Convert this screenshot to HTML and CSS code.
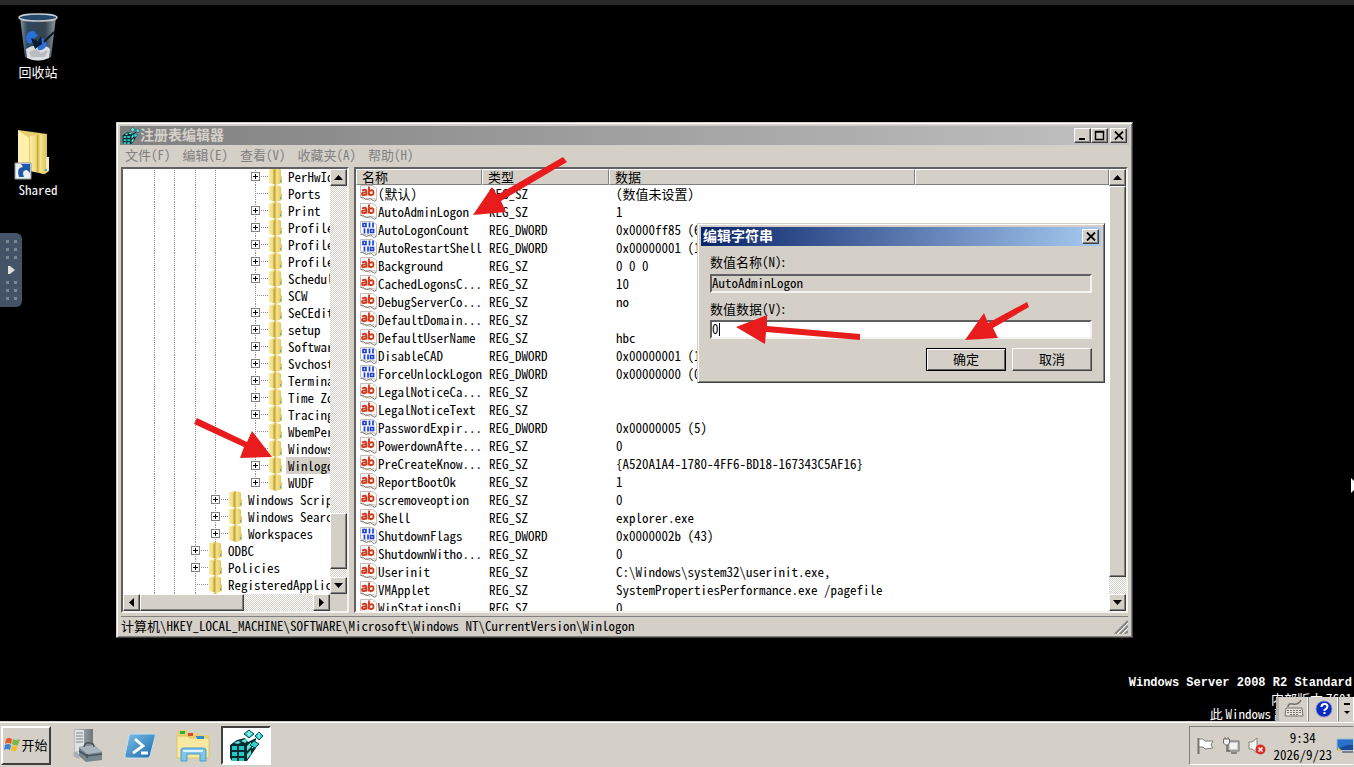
FILE: index.html
```
<!DOCTYPE html>
<html lang="zh-CN">
<head>
<meta charset="utf-8">
<title>注册表编辑器</title>
<link rel="stylesheet" href="styles.css">
</head>
<body>
<svg class="defs" aria-hidden="true">
  <defs>
    <linearGradient id="gold" x1="0" x2="1" y1="0" y2="0"><stop offset="0" stop-color="#f8eda4"/><stop offset=".36" stop-color="#efda7a"/><stop offset=".44" stop-color="#c9aa3c"/><stop offset=".6" stop-color="#f5e590"/><stop offset="1" stop-color="#dcc055"/></linearGradient>
    <linearGradient id="glass" x1="0" x2="1" y1="0" y2="0"><stop offset="0" stop-color="#9aa5ae"/><stop offset=".2" stop-color="#34506a"/><stop offset=".7" stop-color="#3b4a58"/><stop offset="1" stop-color="#a4adb5"/></linearGradient>
    <linearGradient id="blue" x1="0" x2="1" y1="0" y2="1"><stop offset="0" stop-color="#7ec0ea"/><stop offset="1" stop-color="#1768a8"/></linearGradient>
    <linearGradient id="steel" x1="0" x2="1" y1="0" y2="0"><stop offset="0" stop-color="#b8bec2"/><stop offset="1" stop-color="#6e777d"/></linearGradient>
    <symbol id="folder" viewBox="0 0 15 17"><path d="M1 2Q1 1 3 1L7 0L12 1L13 2V8L14 9V15L8 17L1 15Z" fill="url(#gold)"/><path d="M6 2V16" stroke="#b99a32" stroke-width="1"/><path d="M12.500 12v2" stroke="#57a8c6"/></symbol>
    <symbol id="ab" viewBox="0 0 17 17"><path d="M.5.5h12l4 3v11l-4-1-3 2-3-2-3 .5-3-2z" fill="#fcfbfa" stroke="#c4c1bd"/><path d="M.5 12.500q2-1 4 1t4 .5 4 1 4 0" fill="none" stroke="#77736f"/><path d="M2 5.500q4-2 4.500 1v4M6 7.500Q2 7 2 9t4 .5M9 1.500v9M9.500 6q4-2 4 1.500t-4 2" fill="none" stroke="#d43a1e" stroke-width="1.900"/></symbol>
    <symbol id="bin" viewBox="0 0 17 17"><path d="M.5.5h12l4 3v11l-4-1-3 2-3-2-3 .5-3-2z" fill="#f8fafc" stroke="#c4c1bd"/><path d="M.5 13.500q2-1 4 1t4 0 4 1 4-1" fill="none" stroke="#77736f"/><path d="M3 2.500h3v3H3zM9.500 1.500v5M13 1.500v5M4.500 7.500v5M8 7.500v5M10.500 8.500h3v3h-3z" fill="none" stroke="#1c3fd8" stroke-width="1.700"/></symbol>
    <symbol id="reg" viewBox="0 0 34 34"><path d="M1 16L8 11l8-2 3 4 8-4v10l-9 13H3L1 29z" fill="#062d30"/><path d="M3 17h5v4H3zM10 17h5v4h-5zM3 23h5v4H3zM10 23h5v4h-5zM3 29h5v3H3zM10 29h5v3h-5z" fill="#22c9c4"/><path d="M5 14l4-2 3 1-3 2zM12 12l4-2 3 1-3 3zM18 17l4-4v5l-4 4zM18 25l4-4v4l-4 5zM23 14l4-3v5l-4 4z" fill="#55e9e2"/><path d="M20 1l5 4-5 4-5-4zM30 3l4 4-4 4-4-4zM25 12l5 3-4 4-5-3z" fill="#35cfcb" stroke="#064c50"/><path d="M20 2v5M30 4v5M18 4l2 2 3-2" stroke="#b9fffa" fill="none"/></symbol>
    <symbol id="up" viewBox="0 0 9 5"><path d="M0 5L4.500 0L9 5z"/></symbol>
    <symbol id="down" viewBox="0 0 9 5"><path d="M0 0h9L4.500 5z"/></symbol>
    <symbol id="left" viewBox="0 0 5 9"><path d="M5 0v9L0 4.500z"/></symbol>
    <symbol id="right" viewBox="0 0 5 9"><path d="M0 0v9l5-4.500z"/></symbol>
    <symbol id="cross" viewBox="0 0 10 9"><path d="M1 .5l8 8M9 .5l-8 8" stroke="#000" stroke-width="1.800"/></symbol>
  </defs>
</svg>

<div class="screen">
  <main class="desktop">
    <div class="shortcuts">
      <a class="shortcut" href="#recycle">
        <svg width="42" height="50" viewBox="0 0 42 50"><path d="M3 4L8 44q13 7 26 0l5-40z" fill="url(#glass)" opacity=".9"/><path d="M9 36q6-4 12-3 8-2 12 3l-1 9q-11 5-22 0z" fill="#dcdedf"/><path d="M12 39l7-3 5 4 7-3-3 7H14z" fill="#b9bdc0"/><path d="M9 25q1-8 8-7l4 5-5 3-2 5q-5-1-5-6zM19 28l7-3 4 6q-2 7-9 6z" fill="#2d6fd8"/><path d="M14 25l7 3 3-5 1 8-7 5z" fill="#0a1c33"/><path d="M37 19L27 29" stroke="#101a24" stroke-width="2"/><ellipse cx="21" cy="4.500" rx="19" ry="3.500" fill="#25496b" stroke="#c8cdd2" stroke-width="1.500"/></svg>
        <span>回收站</span>
      </a>
      <a class="shortcut" href="#shared">
        <svg width="50" height="52" viewBox="0 0 50 52"><path d="M9 1l29 4v23l2 1v13l-4 3-27-6z" fill="#e7cd70"/><path d="M9 1l11 8v36L9 39z" fill="#fff0ac"/><path d="M21 7l17-2v35l-3 5-14-3z" fill="url(#gold)"/><path d="M37 28h3v13l-3 2z" fill="#f5edc0"/><path d="M37 40v2" stroke="#3fa2d0" stroke-width="2"/><path d="M6 34h16v16H6z" fill="#eef1f4" stroke="#8d969e"/><path d="M10 48q-3-10 4-10l-2-3h9v9l-3-3q-6 0-3 7z" fill="#1e58a6"/></svg>
        <span class="latin">Shared</span>
      </a>
    </div>

    <button class="side-handle" aria-label="展开工具栏"><i></i><svg width="8" height="10" viewBox="0 0 8 10"><path d="M1 1h2l5 4-5 4H1z" fill="#ddd"/></svg><i></i></button>

    <section class="window registry" aria-label="注册表编辑器">
      <header class="titlebar inactive">
        <svg width="18" height="18"><use href="#reg"/></svg>
        <h1>注册表编辑器</h1>
        <button aria-label="最小化"><svg width="12" height="11"><path d="M2 9h6" stroke="#000" stroke-width="2"/></svg></button>
        <button aria-label="最大化"><svg width="12" height="11"><path d="M1.500 1.500h8v8h-8zM1 2h9" fill="none" stroke="#000" stroke-width="1.500"/></svg></button>
        <button class="close" aria-label="关闭"><svg width="10" height="9"><use href="#cross"/></svg></button>
      </header>
      <nav class="menu"><button>文件<b>(F)</b></button><button>编辑<b>(E)</b></button><button>查看<b>(V)</b></button><button>收藏夹<b>(A)</b></button><button>帮助<b>(H)</b></button></nav>
      <div class="panes">
        <div class="pane tree-pane">
          <div class="tree-view">
          <ul class="tree">
            <li class="d3 plus"><svg><use href="#folder"/></svg><span>PerHwIdStorage</span></li>
            <li class="d3"><svg><use href="#folder"/></svg><span>Ports</span></li>
            <li class="d3 plus"><svg><use href="#folder"/></svg><span>Print</span></li>
            <li class="d3 plus"><svg><use href="#folder"/></svg><span>ProfileGuid</span></li>
            <li class="d3 plus"><svg><use href="#folder"/></svg><span>ProfileList</span></li>
            <li class="d3 plus"><svg><use href="#folder"/></svg><span>ProfileNotification</span></li>
            <li class="d3 plus"><svg><use href="#folder"/></svg><span>Schedule</span></li>
            <li class="d3"><svg><use href="#folder"/></svg><span>SCW</span></li>
            <li class="d3 plus"><svg><use href="#folder"/></svg><span>SeCEdit</span></li>
            <li class="d3 plus"><svg><use href="#folder"/></svg><span>setup</span></li>
            <li class="d3 plus"><svg><use href="#folder"/></svg><span>Software</span></li>
            <li class="d3 plus"><svg><use href="#folder"/></svg><span>Svchost</span></li>
            <li class="d3 plus"><svg><use href="#folder"/></svg><span>Terminal Server</span></li>
            <li class="d3 plus"><svg><use href="#folder"/></svg><span>Time Zones</span></li>
            <li class="d3 plus"><svg><use href="#folder"/></svg><span>Tracing</span></li>
            <li class="d3"><svg><use href="#folder"/></svg><span>WbemPerf</span></li>
            <li class="d3"><svg><use href="#folder"/></svg><span>Windows</span></li>
            <li class="d3 plus"><svg><use href="#folder"/></svg><span class="selected">Winlogon</span></li>
            <li class="d3 plus last"><svg><use href="#folder"/></svg><span>WUDF</span></li>
            <li class="d2 plus"><svg><use href="#folder"/></svg><span>Windows Script Host</span></li>
            <li class="d2 plus"><svg><use href="#folder"/></svg><span>Windows Search</span></li>
            <li class="d2 plus"><svg><use href="#folder"/></svg><span>Workspaces</span></li>
            <li class="d1 plus"><svg><use href="#folder"/></svg><span>ODBC</span></li>
            <li class="d1 plus"><svg><use href="#folder"/></svg><span>Policies</span></li>
            <li class="d1"><svg><use href="#folder"/></svg><span>RegisteredApplications</span></li>
            <li class="d1"><svg><use href="#folder"/></svg></li>
          </ul>
          </div>
          <div class="vscroll tree-v"><button aria-label="向上"><svg width="9" height="5"><use href="#up"/></svg></button><div class="thumb"></div><button aria-label="向下"><svg width="9" height="5"><use href="#down"/></svg></button></div>
          <div class="hscroll"><button aria-label="向左"><svg width="5" height="9"><use href="#left"/></svg></button><div class="thumb"></div><button aria-label="向右"><svg width="5" height="9"><use href="#right"/></svg></button></div>
        </div>
        <div class="pane list-pane">
          <div class="list-view">
          <table>
            <colgroup><col class="c-name"><col class="c-type"><col class="c-data"><col></colgroup>
            <thead><tr><th>名称</th><th>类型</th><th>数据</th><th></th></tr></thead>
            <tbody>
              <tr><td class="cjk"><svg><use href="#ab"/></svg>(默认)</td><td>REG_SZ</td><td class="cjk">(数值未设置)</td></tr>
              <tr><td><svg><use href="#ab"/></svg>AutoAdminLogon</td><td>REG_SZ</td><td>1</td></tr>
              <tr><td><svg><use href="#bin"/></svg>AutoLogonCount</td><td>REG_DWORD</td><td>0x0000ff85 (65413)</td></tr>
              <tr><td><svg><use href="#bin"/></svg>AutoRestartShell</td><td>REG_DWORD</td><td>0x00000001 (1)</td></tr>
              <tr><td><svg><use href="#ab"/></svg>Background</td><td>REG_SZ</td><td>0 0 0</td></tr>
              <tr><td><svg><use href="#ab"/></svg>CachedLogonsC...</td><td>REG_SZ</td><td>10</td></tr>
              <tr><td><svg><use href="#ab"/></svg>DebugServerCo...</td><td>REG_SZ</td><td>no</td></tr>
              <tr><td><svg><use href="#ab"/></svg>DefaultDomain...</td><td>REG_SZ</td><td></td></tr>
              <tr><td><svg><use href="#ab"/></svg>DefaultUserName</td><td>REG_SZ</td><td>hbc</td></tr>
              <tr><td><svg><use href="#bin"/></svg>DisableCAD</td><td>REG_DWORD</td><td>0x00000001 (1)</td></tr>
              <tr><td><svg><use href="#bin"/></svg>ForceUnlockLogon</td><td>REG_DWORD</td><td>0x00000000 (0)</td></tr>
              <tr><td><svg><use href="#ab"/></svg>LegalNoticeCa...</td><td>REG_SZ</td><td></td></tr>
              <tr><td><svg><use href="#ab"/></svg>LegalNoticeText</td><td>REG_SZ</td><td></td></tr>
              <tr><td><svg><use href="#bin"/></svg>PasswordExpir...</td><td>REG_DWORD</td><td>0x00000005 (5)</td></tr>
              <tr><td><svg><use href="#ab"/></svg>PowerdownAfte...</td><td>REG_SZ</td><td>0</td></tr>
              <tr><td><svg><use href="#ab"/></svg>PreCreateKnow...</td><td>REG_SZ</td><td>{A520A1A4-1780-4FF6-BD18-167343C5AF16}</td></tr>
              <tr><td><svg><use href="#ab"/></svg>ReportBootOk</td><td>REG_SZ</td><td>1</td></tr>
              <tr><td><svg><use href="#ab"/></svg>scremoveoption</td><td>REG_SZ</td><td>0</td></tr>
              <tr><td><svg><use href="#ab"/></svg>Shell</td><td>REG_SZ</td><td>explorer.exe</td></tr>
              <tr><td><svg><use href="#bin"/></svg>ShutdownFlags</td><td>REG_DWORD</td><td>0x0000002b (43)</td></tr>
              <tr><td><svg><use href="#ab"/></svg>ShutdownWitho...</td><td>REG_SZ</td><td>0</td></tr>
              <tr><td><svg><use href="#ab"/></svg>Userinit</td><td>REG_SZ</td><td>C:\Windows\system32\userinit.exe,</td></tr>
              <tr><td><svg><use href="#ab"/></svg>VMApplet</td><td>REG_SZ</td><td>SystemPropertiesPerformance.exe /pagefile</td></tr>
              <tr><td><svg><use href="#ab"/></svg>WinStationsDi...</td><td>REG_SZ</td><td>0</td></tr>
            </tbody>
          </table>
          </div>
          <div class="vscroll list-v"><button aria-label="向上"><svg width="9" height="5"><use href="#up"/></svg></button><div class="thumb"></div><button aria-label="向下"><svg width="9" height="5"><use href="#down"/></svg></button></div>
        </div>
      </div>
      <footer class="status"><span class="path">计算机<b>\HKEY_LOCAL_MACHINE\SOFTWARE\Microsoft\Windows NT\CurrentVersion\Winlogon</b></span><svg width="14" height="14"><path d="M1 14L14 1M6 14l8-8M11 14l3-3" stroke="#858585" stroke-width="2"/><path d="M3 14L14 3M8 14l6-6" stroke="#fff"/></svg></footer>
    </section>

    <form class="window dialog" aria-label="编辑字符串">
      <header class="titlebar"><h2>编辑字符串</h2><button type="button" class="close" aria-label="关闭"><svg width="10" height="9"><use href="#cross"/></svg></button></header>
      <div class="fields">
        <label for="vname">数值名称<b>(N)</b>:</label>
        <input id="vname" value="AutoAdminLogon" readonly>
        <label for="vdata">数值数据<b>(V)</b>:</label>
        <div class="entry"><input id="vdata" value="0"></div>
        <div class="actions"><button type="button" class="push default">确定</button><button type="button" class="push">取消</button></div>
      </div>
    </form>

    <div class="watermark"><strong>Windows Server 2008 R2 Standard</strong><span>内部版本 <b>7601</b></span><span>此 <b>Windows</b> 副本不是正版</span></div>

    <div class="langbar">
      <button aria-label="键盘"><svg width="20" height="18" viewBox="0 0 20 18"><path d="M2 8h16l1 8H1z" fill="#e5e3de" stroke="#77736c"/><path d="M3 10.500h14M3 12.500h14M6 14.500h8" stroke="#77736c" stroke-dasharray="2 1"/><path d="M4 7q0-4 5-3t8-4" fill="none" stroke="#77736c" stroke-width="1.500"/></svg></button>
      <button aria-label="帮助"><svg width="18" height="18" viewBox="0 0 18 18"><circle cx="9" cy="9" r="8" fill="#0a2bc4" stroke="#8090c0"/><path d="M6.500 7q0-3 3-3t3 2.500q0 1.500-3 3.500v1M9.500 12v2" fill="none" stroke="#fff" stroke-width="2"/></svg></button>
      <button class="options" aria-label="选项"><svg width="6" height="14"><path d="M0 2h6" stroke="#000" stroke-width="2"/><path d="M0 9h6l-3 3z"/></svg></button>
    </div>
  </main>

  <footer class="taskbar">
    <button class="start"><svg width="16" height="16" viewBox="0 0 16 16"><path d="M2 2q3-2 6 0L7 7Q4 5 1 7z" fill="#e8592b"/><path d="M9 2q3 2 7 0l-2 6q-3 1-6-1z" fill="#7ab648"/><path d="M1 8q3-2 6 0l-1 5q-3-2-6 0z" fill="#3b83d6"/><path d="M8 8q3 2 6 0l-2 6q-3 1-5-1z" fill="#f5bd2b"/></svg>开始</button>
    <div class="tasks">
      <button aria-label="服务器管理器"><svg width="32" height="34" viewBox="0 0 32 34"><path d="M3 0h19v27H3z" fill="url(#steel)"/><path d="M4 1h9v26l-7-3H4z" fill="#dfe3e4"/><path d="M5 4h7M5 7h7M5 10h7M5 13h7" stroke="#7e868b"/><path d="M2 24l4-2 3 8-6-2z" fill="#a9b0b4"/><path d="M8 18l15-2 8 7v8l-16 2-7-6z" fill="#78868f"/><path d="M8 18l15-2 8 7-15 2z" fill="#a9b5bd"/><path d="M13 18q1-5 6-4 4 0 4 4M16 25v4M8 22l8 5 15-2" fill="none" stroke="#46545d" stroke-width="1.500"/></svg></button>
      <button aria-label="PowerShell"><svg width="32" height="28" viewBox="0 0 32 28"><path d="M6 2h24q2 0 1 3l-5 19q-1 2-3 2H3q-3 0-2-3L5 4q0-2 1-2z" fill="url(#blue)" stroke="#c4dff0"/><path d="M11 7l8 7-10 7M17 21h7" fill="none" stroke="#fff" stroke-width="2.800"/></svg></button>
      <button aria-label="资源管理器"><svg width="36" height="33" viewBox="0 0 36 33"><path d="M2 4l2-3h8l2 3h8l2 2h10v23H2z" fill="#e9cf70"/><path d="M5 2h5v3H5z" fill="#28b04a"/><path d="M13 4h5v3h-5z" fill="#d44a35"/><path d="M21 7h6v3h-6z" fill="#2d8bd0"/><path d="M2 7h10l3 2h19v20H2z" fill="#f8e9a2" stroke="#dfc663"/><path d="M13 5h5v2h-5z" fill="#d44a35"/><path d="M22 7h7v3h-7z" fill="#2d8bd0"/><path d="M6 32V21q0-2 3-2h19q3 0 3 2v11h-6v-7H12v7z" fill="#82c3e9" stroke="#4b9ccc"/><path d="M8 22h20" stroke="#dff3ff" stroke-width="2"/></svg></button>
      <button class="active" aria-label="注册表编辑器"><svg width="34" height="34"><use href="#reg"/></svg></button>
    </div>
    <div class="tray">
      <svg width="18" height="18" viewBox="0 0 18 18"><path d="M2.500 1v16" stroke="#77736c" stroke-width="2"/><path d="M3 2q4-1 6 2h8l-2 4 2 3-8 1-2-2H3z" fill="#fff" stroke="#817d77"/></svg>
      <svg width="18" height="18" viewBox="0 0 18 18"><path d="M6 4h11v10H6z" fill="#c8c8c5" stroke="#6e6b66"/><path d="M8 6h7v6H8z" fill="#f3f3f0"/><path d="M9 16h6M5 8v6h3" fill="none" stroke="#6e6b66" stroke-width="1.500"/><path d="M1.500 2h6v4l-2 2h-2l-2-2zM3 0v2M6 0v2" fill="#eee" stroke="#6e6b66"/></svg>
      <svg width="18" height="18" viewBox="0 0 18 18"><path d="M1 5h3l5-4v15l-5-4H1z" fill="#f6f6f4" stroke="#85827c"/><circle cx="12.500" cy="12.500" r="5" fill="#dd2b25"/><path d="M10.500 10.500l4 4M14.500 10.500l-4 4" stroke="#fff" stroke-width="1.500"/></svg>
      <time datetime="2026-09-23T09:34"><span>9:34</span><span>2026/9/23</span></time>
      <svg class="show" width="17" height="15" viewBox="0 0 17 15"><path d="M1 1h17v11H1z" fill="#2872cc" stroke="#9bb9dc"/><path d="M1 12q8-6 17-5v5z" fill="#164b9b"/><path d="M2 9l3 3-3 2z" fill="#f2ca3d"/><path d="M6 14h11" stroke="#20324d"/></svg>
    </div>
  </footer>

  <svg class="overlay" width="1354" height="767" aria-hidden="true">
    <g fill="#e81c1c"><path d="M473 215L492 187L497 195L563 157L567 162L501 201L506 212z"/><path d="M272 457L252 431L247 442L197 418L194 424L244 447L240 458z"/><path d="M736 327L767 315V326L860 334V340L766 332L765 344z"/><path d="M965 340L984 313L988 323L1027 302L1029 307L993 328L998 338z"/></g>
    <path d="M1351 478v15l3-3v-9z" fill="#fff"/>
  </svg>
</div>
</body>
</html>
```
FILE: styles.css
```
:root {
  --face: #d4d0c8;
  --mono: "Noto Sans Mono CJK SC", "Liberation Mono", "Noto Sans CJK SC", monospace;
  --cjk: "Noto Sans CJK SC", sans-serif;
}
*, *::before, *::after { box-sizing: border-box; }
body { margin: 0; background: #000; color: #000; font: 13px/17px var(--cjk); }
button { font: inherit; color: inherit; padding: 0; border: 0; background: none; display: flex; align-items: center; justify-content: center; }
h1, h2, ul { margin: 0; padding: 0; }
b { font-family: var(--mono); font-weight: 400; }
svg { flex: none; display: block; }
.defs { position: absolute; width: 0; height: 0; }

.screen { position: relative; display: flex; flex-direction: column; height: 100vh; overflow: hidden; }
.desktop { position: relative; flex: 1; min-height: 0; border-top: 5px solid #2a2a2a; }

.shortcuts { display: flex; flex-direction: column; gap: 49px; width: 76px; padding-top: 8px; }
.shortcut { display: flex; flex-direction: column; align-items: center; color: #fff; text-decoration: none; }
.shortcut:nth-child(2) svg { margin-right: 8px; }
.latin { font-family: var(--mono); }

.side-handle { position: absolute; left: 0; top: 228px; width: 22px; height: 74px; flex-direction: column; gap: 6px; border-radius: 0 6px 6px 0; background: #455369; }
.side-handle i { width: 11px; height: 19px; background: conic-gradient(at 3px 3px, transparent 75%, #7c8796 0) 0 0 / 8px 8px; }

.window { position: absolute; display: flex; flex-direction: column; background: var(--face); border: 1px solid; border-color: #d4d0c8 #404040 #404040 #d4d0c8; box-shadow: inset 1px 1px #fff, inset -1px -1px #808080; }
.registry { left: 116px; right: 221px; top: 117px; bottom: 83px; padding: 3px; }
.dialog { left: 697px; top: 218px; width: 408px; padding: 3px; }

.titlebar { display: flex; align-items: center; height: 19px; padding: 0 2px; color: #fff; background: linear-gradient(90deg, #0a246a, #a6caf0); flex: none; }
.titlebar.inactive { color: var(--face); background: linear-gradient(90deg, #808080, #c0c0c0); }
.titlebar h1, .titlebar h2 { flex: 1; padding-bottom: 2px; font: 700 14px/17px var(--cjk); }
.titlebar button, .vscroll button, .hscroll button, .thumb, .push { background: var(--face); border: 1px solid; border-color: #fff #404040 #404040 #fff; box-shadow: inset -1px -1px #808080; }
.titlebar button { width: 17px; height: 15px; }
.titlebar .close { margin-left: 2px; }

.menu { display: flex; gap: 12px; height: 22px; padding: 0 0 3px 5px; color: #808080; flex: none; }

.panes { display: flex; flex: 1; min-height: 0; gap: 5px; padding: 0 1px; }
.pane { display: grid; background: #fff; border: 2px solid; border-color: #606060 #f4f3f0 #f4f3f0 #606060; overflow: hidden; min-height: 0; }
.tree-pane { width: 228px; grid-template: minmax(0, 1fr) 17px / minmax(0, 1fr) 17px; background: var(--face); }
.tree-view { overflow: hidden; background: #fff; min-height: 0; }
.list-pane { flex: 1; grid-template: minmax(0, 1fr) / minmax(0, 1fr) 17px; }
.list-view { overflow: hidden; min-height: 0; }

.tree { --v: repeating-linear-gradient(#909090 0 1px, transparent 1px 2px); --h: repeating-linear-gradient(90deg, #909090 0 1px, transparent 1px 2px); margin-top: -1px; list-style: none; font: 13px/17px var(--mono); }
.tree li { display: flex; align-items: center; height: 17px; white-space: nowrap; background-image: var(--v), var(--v), var(--v), var(--v), var(--v), var(--h); background-size: 1px 17px, 1px 17px, 1px 17px, 1px 17px, 1px 17px, 12px 1px; background-repeat: no-repeat; }
.tree .d3 { padding-left: 128px; background-position: 31px 0, 51px 0, 72px 0, 92px 0, 132px 0, 134px 8px; }
.tree .last { background-size: 1px 17px, 1px 17px, 1px 17px, 1px 17px, 1px 9px, 12px 1px; }
.tree .d2 { padding-left: 88px; background-position: 31px 0, 51px 0, 72px 0, 92px 0, 92px 0, 94px 8px; }
.tree .d1 { padding-left: 68px; background-position: 31px 0, 51px 0, 72px 0, 72px 0, 72px 0, 74px 8px; }
.tree li::before { content: ""; width: 9px; height: 9px; margin-right: 8px; flex: none; }
.tree .plus::before { background: linear-gradient(#000, #000) 1px 3px / 5px 1px no-repeat, linear-gradient(#000, #000) 3px 1px / 1px 5px no-repeat, #fff; border: 1px solid #808080; }
.tree svg { width: 15px; height: 17px; }
.tree span { margin-left: 3px; padding: 0 2px; }
.selected { background: var(--face); }

.vscroll, .hscroll { display: flex; background: repeating-conic-gradient(#fff 0 25%, #d4d0c8 0 50%) 0 0 / 2px 2px; }
.vscroll { flex-direction: column; }
.vscroll button, .hscroll button { width: 17px; height: 17px; flex: none; }
.hscroll button:last-child { margin-left: auto; }
.tree-v .thumb { height: 56px; margin-top: auto; margin-bottom: 8px; }
.list-v .thumb { flex: 1; margin-bottom: 17px; }
.hscroll .thumb { width: 104px; }

table { width: 100%; border-collapse: separate; border-spacing: 0; table-layout: fixed; font: 13px/18px var(--mono); }
.c-name { width: 126px; }
.c-type { width: 127px; }
.c-data { width: 306px; }
th { height: 16px; padding: 0 0 0 5px; font: 13px/14px var(--cjk); text-align: left; background: var(--face); border: 1px solid; border-color: #fff #808080 #808080 #fff; }
td { height: 18px; padding: 0 0 0 7px; white-space: nowrap; }
td:first-child { padding-left: 4px; }
td svg { display: inline-block; width: 17px; height: 17px; margin-right: 1px; vertical-align: top; }

.status { display: flex; align-items: stretch; height: 18px; margin: 3px 1px 0; border-top: 1px solid #808080; flex: none; }
.path { flex: 1; white-space: nowrap; }
.status svg { align-self: flex-end; }

.fields { display: flex; flex-direction: column; padding: 7px 9px 8px; }
.fields label { height: 19px; line-height: 17px; }
.fields input { width: 100%; height: 19px; padding: 0 0 2px; border: 2px solid; border-color: #606060 #f4f3f0 #f4f3f0 #606060; border-radius: 0; background: #fff; font: 13px/15px var(--mono); outline: none; }
.fields input[readonly] { background: var(--face); margin: 2px 0 7px; }
.entry { position: relative; display: flex; margin-top: 1px; }
.entry::after { content: ""; position: absolute; left: 9px; top: 3px; width: 1px; height: 13px; background: #000; }
.actions { display: flex; justify-content: flex-end; gap: 6px; padding-top: 9px; }
.push { width: 80px; height: 23px; padding-bottom: 2px; }
.push.default { outline: 1px solid #000; outline-offset: -1px; border-color: #000; box-shadow: inset 1px 1px #fff, inset -1px -1px #606060; }

.watermark { position: absolute; right: 2px; bottom: 0; display: flex; flex-direction: column; align-items: flex-end; color: #fff; line-height: 15px; }
.watermark strong { font: 700 12px/15px "Liberation Mono", monospace; }
.watermark span { height: 15px; }

.langbar { position: absolute; right: 0; bottom: 0; display: flex; height: 24px; width: 78px; background: var(--face); border-left: 3px solid #b6b2aa; }
.langbar button { width: 30px; border-right: 1px solid #808080; box-shadow: inset -1px 0 #fff; }
.langbar .options { flex: 1; border: 0; }

.taskbar { display: flex; gap: 11px; height: 46px; padding: 4px 0 2px 1px; background: var(--face); border-top: 1px solid #d4d0c8; box-shadow: inset 0 1px #fff; flex: none; }
.start { width: 50px; gap: 1px; padding-bottom: 2px; border: 2px solid; border-color: #fff #404040 #404040 #fff; }
.tasks { display: flex; flex: 1; gap: 3px; }
.tasks button { width: 50px; }
.tasks .active { background: #fff; border: 2px solid; border-color: #404040 #fff #fff #404040; }
.tray { display: flex; align-items: center; gap: 8px; padding-left: 6px; border: 1px solid; border-color: #808080 transparent #fff #808080; }
.tray time { display: flex; flex-direction: column; align-items: center; font: 13px/17px var(--mono); }
.tray .show { margin-left: -4px; }

.overlay { position: absolute; left: 0; top: 0; pointer-events: none; }
```
